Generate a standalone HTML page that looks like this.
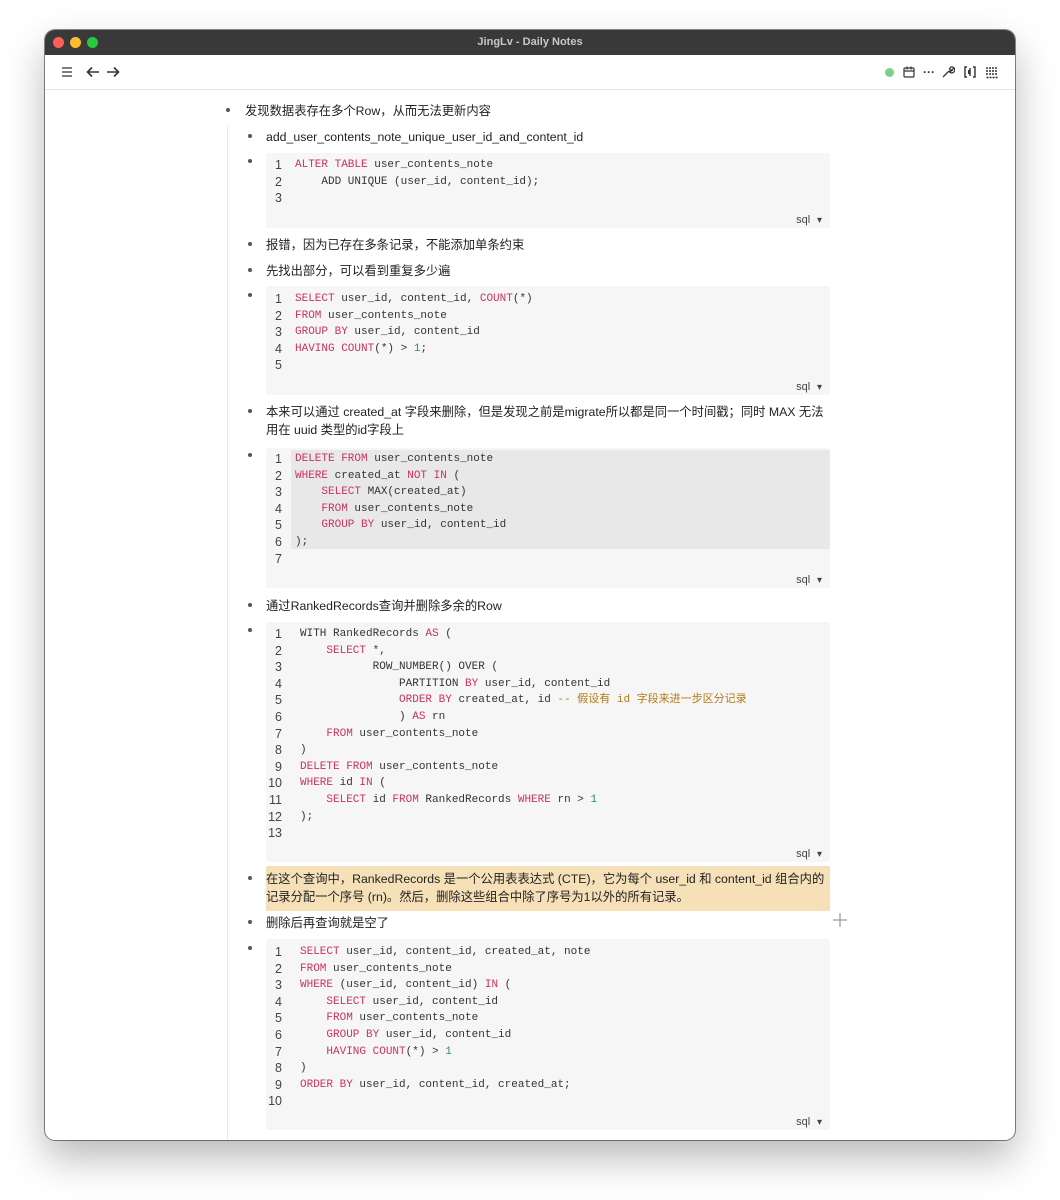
<!DOCTYPE html>
<html><head><meta charset="utf-8">
<style>
*{margin:0;padding:0;box-sizing:border-box}
body{width:1060px;height:1200px;background:#fff;position:relative;overflow:hidden;font-family:"Liberation Sans","Noto Sans CJK SC",sans-serif;color:#222}
.win{position:absolute;left:45px;top:30px;width:970px;height:1110px;border-radius:10px;background:#fff;box-shadow:0 18px 40px rgba(0,0,0,.28),0 0 0 1px rgba(0,0,0,.45);overflow:hidden}
.title{position:absolute;left:0;top:0;width:970px;height:25px;background:#393939;color:#c8c8c8;font-size:11px;font-weight:bold;text-align:center;line-height:25px}
.dot{position:absolute;top:7px;width:11px;height:11px;border-radius:50%}
.tb{position:absolute;left:0;top:25px;width:970px;height:35px;border-bottom:1px solid #e6e6e6;background:#fff}
.abs{position:absolute}
.t{position:absolute;font-size:12.3px;line-height:18px;white-space:nowrap;color:#222}
.b{position:absolute;width:4px;height:4px;border-radius:50%;background:#555}
.cb{position:absolute;left:221px;width:564px;background:#f6f6f6;border-radius:3px;font-family:"Liberation Mono","Noto Sans CJK SC",monospace;font-size:11px;color:#333}
.ln{position:relative;height:16.6px;line-height:16.6px;white-space:pre}
.ln .n{position:absolute;left:0;width:16px;text-align:right;color:#444;font-size:12.5px;font-family:"Liberation Sans",sans-serif}
.ln .c{position:absolute;left:29px}
.w .ln .c{left:34px}
.k{color:#c7345f}.m{color:#2e8c6e}.cm{color:#b57a16}
.sql{position:absolute;right:8px;bottom:2px;font-family:"Liberation Sans",sans-serif;font-size:11px;color:#444}
.sql:after{content:" ▾";font-size:10px;padding-left:4px}
.hl{background:#e8e8e8}
</style></head><body>
<div class="win">
<div class="title">JingLv - Daily Notes</div>
<div class="dot" style="left:8px;background:#fe5f57"></div>
<div class="dot" style="left:25px;background:#febc2e"></div>
<div class="dot" style="left:42px;background:#28c840"></div>
<div class="tb">
<svg class="abs" style="left:15px;top:11px" width="14" height="12" viewBox="0 0 14 12"><path d="M2 2h10M2 6h10M2 10h10" stroke="#555" stroke-width="1.4"/></svg>
<svg class="abs" style="left:40px;top:9px" width="16" height="16" viewBox="0 0 16 16"><path d="M14 8H3M7 3.5L2.5 8 7 12.5" stroke="#333" stroke-width="1.6" fill="none"/></svg>
<svg class="abs" style="left:60px;top:9px" width="16" height="16" viewBox="0 0 16 16"><path d="M2 8h11M9 3.5L13.5 8 9 12.5" stroke="#333" stroke-width="1.6" fill="none"/></svg>
<div class="abs" style="left:840px;top:13px;width:9px;height:9px;border-radius:50%;background:#7ccf8c"></div>
<svg class="abs" style="left:857px;top:10px" width="14" height="14" viewBox="0 0 14 14"><rect x="2" y="3" width="10" height="9" rx="1" stroke="#333" stroke-width="1.2" fill="none"/><path d="M2 6h10M5 1.5v3M9 1.5v3" stroke="#333" stroke-width="1.2"/></svg>
<div class="abs" style="left:878px;top:10px;font-size:12px;color:#333;font-weight:bold">···</div>
<svg class="abs" style="left:896px;top:10px" width="14" height="14" viewBox="0 0 14 14"><path d="M2 12l6-6M8 6a3 3 0 1 0 2-4l-1.5 1.8 1.6 1.6L12 4a3 3 0 0 1-4 2" stroke="#333" stroke-width="1.3" fill="none"/></svg>
<svg class="abs" style="left:918px;top:10px" width="14" height="14" viewBox="0 0 14 14"><path d="M4 2H2v10h2M10 2h2v10h-2M7 3v8" stroke="#333" stroke-width="1.4" fill="none"/><rect x="5" y="5" width="2" height="4" fill="#333"/></svg>
<svg class="abs" style="left:940px;top:10px" width="14" height="14" viewBox="0 0 14 14"><path d="M2 2v8M5 2v8M8 2v8M11 2v8M1.5 12.5h11" stroke="#333" stroke-width="1.5" stroke-dasharray="2 1"/></svg>
</div>

<div class="abs" style="left:182px;top:95px;width:1px;height:1015px;background:#e8e8e8"></div>

<div class="b" style="left:181px;top:78px"></div><div class="t" style="left:200px;top:72px">发现数据表存在多个Row，从而无法更新内容</div>
<div class="b" style="left:203px;top:104px"></div><div class="t" style="left:221px;top:98px">add_user_contents_note_unique_user_id_and_content_id</div>

<div class="b" style="left:203px;top:129px"></div>
<div class="cb" style="top:123px;height:75px;padding-top:4px">
<div class="ln"><span class="n">1</span><span class="c"><span class="k">ALTER TABLE</span> user_contents_note</span></div>
<div class="ln"><span class="n">2</span><span class="c">    ADD UNIQUE (user_id, content_id);</span></div>
<div class="ln"><span class="n">3</span><span class="c"></span></div>
<div class="sql">sql</div></div>

<div class="b" style="left:203px;top:212px"></div><div class="t" style="left:221px;top:206px">报错，因为已存在多条记录，不能添加单条约束</div>
<div class="b" style="left:203px;top:238px"></div><div class="t" style="left:221px;top:232px">先找出部分，可以看到重复多少遍</div>

<div class="b" style="left:203px;top:263px"></div>
<div class="cb" style="top:256px;height:109px;padding-top:5px">
<div class="ln"><span class="n">1</span><span class="c"><span class="k">SELECT</span> user_id, content_id, <span class="k">COUNT</span>(*)</span></div>
<div class="ln"><span class="n">2</span><span class="c"><span class="k">FROM</span> user_contents_note</span></div>
<div class="ln"><span class="n">3</span><span class="c"><span class="k">GROUP BY</span> user_id, content_id</span></div>
<div class="ln"><span class="n">4</span><span class="c"><span class="k">HAVING COUNT</span>(*) &gt; <span class="m">1</span>;</span></div>
<div class="ln"><span class="n">5</span><span class="c"></span></div>
<div class="sql">sql</div></div>

<div class="b" style="left:203px;top:379px"></div><div class="t" style="left:221px;top:373px;line-height:18px">本来可以通过 created_at 字段来删除，但是发现之前是migrate所以都是同一个时间戳；同时 MAX 无法<br>用在 uuid 类型的id字段上</div>

<div class="b" style="left:203px;top:423px"></div>
<div class="cb" style="top:418px;height:140px;padding-top:3px">
<div class="hl" style="position:absolute;left:25px;right:0;top:2px;height:99px"></div>
<div class="ln"><span class="n">1</span><span class="c"><span class="k">DELETE FROM</span> user_contents_note</span></div>
<div class="ln"><span class="n">2</span><span class="c"><span class="k">WHERE</span> created_at <span class="k">NOT IN</span> (</span></div>
<div class="ln"><span class="n">3</span><span class="c">    <span class="k">SELECT</span> MAX(created_at)</span></div>
<div class="ln"><span class="n">4</span><span class="c">    <span class="k">FROM</span> user_contents_note</span></div>
<div class="ln"><span class="n">5</span><span class="c">    <span class="k">GROUP BY</span> user_id, content_id</span></div>
<div class="ln"><span class="n">6</span><span class="c">);</span></div>
<div class="ln"><span class="n">7</span><span class="c"></span></div>
<div class="sql">sql</div></div>

<div class="b" style="left:203px;top:573px"></div><div class="t" style="left:221px;top:567px">通过RankedRecords查询并删除多余的Row</div>

<div class="b" style="left:203px;top:598px"></div>
<div class="cb w" style="top:592px;height:240px;padding-top:4px">
<div class="ln"><span class="n">1</span><span class="c">WITH RankedRecords <span class="k">AS</span> (</span></div>
<div class="ln"><span class="n">2</span><span class="c">    <span class="k">SELECT</span> *,</span></div>
<div class="ln"><span class="n">3</span><span class="c">           ROW_NUMBER() OVER (</span></div>
<div class="ln"><span class="n">4</span><span class="c">               PARTITION <span class="k">BY</span> user_id, content_id</span></div>
<div class="ln"><span class="n">5</span><span class="c">               <span class="k">ORDER BY</span> created_at, id <span class="cm">-- 假设有 id 字段来进一步区分记录</span></span></div>
<div class="ln"><span class="n">6</span><span class="c">               ) <span class="k">AS</span> rn</span></div>
<div class="ln"><span class="n">7</span><span class="c">    <span class="k">FROM</span> user_contents_note</span></div>
<div class="ln"><span class="n">8</span><span class="c">)</span></div>
<div class="ln"><span class="n">9</span><span class="c"><span class="k">DELETE FROM</span> user_contents_note</span></div>
<div class="ln"><span class="n">10</span><span class="c"><span class="k">WHERE</span> id <span class="k">IN</span> (</span></div>
<div class="ln"><span class="n">11</span><span class="c">    <span class="k">SELECT</span> id <span class="k">FROM</span> RankedRecords <span class="k">WHERE</span> rn &gt; <span class="m">1</span></span></div>
<div class="ln"><span class="n">12</span><span class="c">);</span></div>
<div class="ln"><span class="n">13</span><span class="c"></span></div>
<div class="sql">sql</div></div>

<div class="b" style="left:203px;top:846px"></div>
<div class="abs" style="left:221px;top:836px;width:564px;height:45px;background:#f6e0b7"></div>
<div class="t" style="left:221px;top:840px">在这个查询中，RankedRecords 是一个公用表表达式 (CTE)，它为每个 user_id 和 content_id 组合内的<br>记录分配一个序号 (rn)。然后，删除这些组合中除了序号为1以外的所有记录。</div>

<div class="b" style="left:203px;top:890px"></div><div class="t" style="left:221px;top:884px">删除后再查询就是空了</div>
<svg class="abs" style="left:788px;top:883px" width="14" height="14" viewBox="0 0 14 14"><path d="M7 0v14M0 7h14" stroke="#999" stroke-width="1.2"/></svg>

<div class="b" style="left:203px;top:916px"></div>
<div class="cb w" style="top:909px;height:191px;padding-top:5px">
<div class="ln"><span class="n">1</span><span class="c"><span class="k">SELECT</span> user_id, content_id, created_at, note</span></div>
<div class="ln"><span class="n">2</span><span class="c"><span class="k">FROM</span> user_contents_note</span></div>
<div class="ln"><span class="n">3</span><span class="c"><span class="k">WHERE</span> (user_id, content_id) <span class="k">IN</span> (</span></div>
<div class="ln"><span class="n">4</span><span class="c">    <span class="k">SELECT</span> user_id, content_id</span></div>
<div class="ln"><span class="n">5</span><span class="c">    <span class="k">FROM</span> user_contents_note</span></div>
<div class="ln"><span class="n">6</span><span class="c">    <span class="k">GROUP BY</span> user_id, content_id</span></div>
<div class="ln"><span class="n">7</span><span class="c">    <span class="k">HAVING COUNT</span>(*) &gt; <span class="m">1</span></span></div>
<div class="ln"><span class="n">8</span><span class="c">)</span></div>
<div class="ln"><span class="n">9</span><span class="c"><span class="k">ORDER BY</span> user_id, content_id, created_at;</span></div>
<div class="ln"><span class="n">10</span><span class="c"></span></div>
<div class="sql">sql</div></div>
</div>
</body></html>
